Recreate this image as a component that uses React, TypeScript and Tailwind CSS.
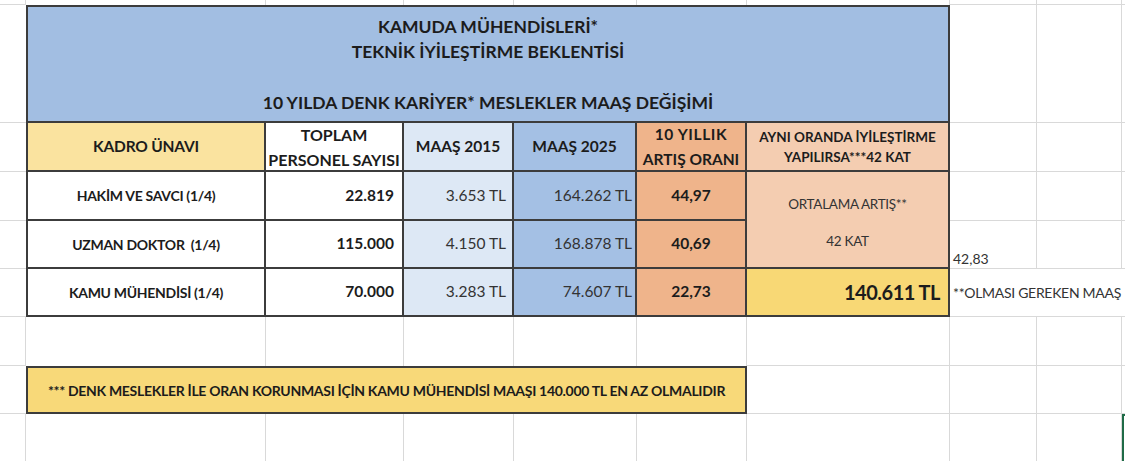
export default function App() {
  return (
    <div className="w-[1125px] h-[461px] overflow-hidden bg-white font-['Lato',sans-serif] text-[#1c1c1c]">
      <div className="grid grid-cols-[26px_240px_138px_110px_123px_110px_203px_87px_85px_3px] grid-rows-[5px_118px_49px_49px_48px_48px_49px_48px_47px]">
        {/* Row 0 */}
        <div className="border-r border-b border-[#d9d9d9]" />
        <div className="border-r border-[#d9d9d9]" />
        <div className="border-r border-[#d9d9d9]" />
        <div className="border-r border-[#d9d9d9]" />
        <div className="border-r border-[#d9d9d9]" />
        <div className="border-r border-[#d9d9d9]" />
        <div className="border-r border-[#d9d9d9]" />
        <div className="border-r border-b border-[#d9d9d9]" />
        <div className="border-r border-b border-[#d9d9d9]" />
        <div className="border-b border-[#d9d9d9]" />

        {/* Row 1: title */}
        <div className="border-b border-[#d9d9d9]" />
        <div className="col-span-6 bg-[#a2bee2] border-2 border-[#3c3c3c] flex flex-col items-center justify-center font-bold text-[17.5px] leading-[25.5px] pt-[1px]">
          <div>KAMUDA MÜHENDİSLERİ*</div>
          <div>TEKNİK İYİLEŞTİRME BEKLENTİSİ</div>
          <div>&nbsp;</div>
          <div>10 YILDA DENK KARİYER* MESLEKLER MAAŞ DEĞİŞİMİ</div>
        </div>
        <div className="border-r border-b border-[#d9d9d9]" />
        <div className="border-r border-b border-[#d9d9d9]" />
        <div className="border-b border-[#d9d9d9]" />

        {/* Row 2: headers */}
        <div className="border-b border-[#d9d9d9]" />
        <div className="bg-[#fae39f] border-l-2 border-r-2 border-b-2 border-[#3c3c3c] flex items-center justify-center font-bold text-[15.5px] tracking-[-0.2px]">
          KADRO ÜNAVI
        </div>
        <div className="bg-white border-r-2 border-b-2 border-[#3c3c3c] flex flex-col items-center justify-center font-bold text-[16px] leading-[25px]">
          <div>TOPLAM</div>
          <div>PERSONEL SAYISI</div>
        </div>
        <div className="bg-[#dde8f5] border-r-2 border-b-2 border-[#3c3c3c] flex items-center justify-center font-bold text-[15.5px]">
          MAAŞ 2015
        </div>
        <div className="bg-[#a4c0e4] border-r-2 border-b-2 border-[#3c3c3c] flex items-center justify-center font-bold text-[15.5px]">
          MAAŞ 2025
        </div>
        <div className="bg-[#efb48b] border-r-2 border-b-2 border-[#3c3c3c] flex flex-col items-center justify-center font-bold text-[15.5px] leading-[25px]">
          <div className="tracking-[0.6px]">10 YILLIK</div>
          <div>ARTIŞ ORANI</div>
        </div>
        <div className="bg-[#f4cdb1] border-r-2 border-b-2 border-[#3c3c3c] flex flex-col items-center justify-center font-bold text-[13.5px] leading-[20px]">
          <div>AYNI ORANDA İYİLEŞTİRME</div>
          <div>YAPILIRSA***42 KAT</div>
        </div>
        <div className="border-r border-b border-[#d9d9d9]" />
        <div className="border-r border-b border-[#d9d9d9]" />
        <div className="border-b border-[#d9d9d9]" />

        {/* Row 3 */}
        <div className="border-b border-[#d9d9d9]" />
        <div className="bg-white border-l-2 border-r-2 border-b-2 border-[#3c3c3c] flex items-center justify-center font-bold text-[14px] tracking-[-0.3px]">
          HAKİM VE SAVCI (1/4)
        </div>
        <div className="bg-white border-r-2 border-b-2 border-[#3c3c3c] flex items-center justify-end pr-[8px] font-bold text-[15.5px]">
          22.819
        </div>
        <div className="bg-[#dde8f5] border-r-2 border-b-2 border-[#3c3c3c] flex items-center justify-end pr-[6px] text-[15.5px] text-[#333]">
          3.653 TL
        </div>
        <div className="bg-[#a4c0e4] border-r-2 border-b-2 border-[#3c3c3c] flex items-center justify-end pr-[3px] text-[15.5px] text-[#333]">
          164.262 TL
        </div>
        <div className="bg-[#efb48b] border-r-2 border-b-2 border-[#3c3c3c] flex items-center justify-center font-bold text-[15.5px]">
          44,97
        </div>
        <div className="row-span-2 bg-[#f4cdb1] border-r-2 border-b-2 border-[#3c3c3c] flex flex-col items-center justify-center pt-[6px] gap-[19px] text-[13.5px] leading-[18px] tracking-[-0.3px] text-[#333]">
          <div>ORTALAMA ARTIŞ**</div>
          <div>42 KAT</div>
        </div>
        <div className="border-r border-b border-[#d9d9d9]" />
        <div className="border-r border-b border-[#d9d9d9]" />
        <div className="border-b border-[#d9d9d9]" />

        {/* Row 4 */}
        <div className="border-b border-[#d9d9d9]" />
        <div className="bg-white border-l-2 border-r-2 border-b-2 border-[#3c3c3c] flex items-center justify-center font-bold text-[14px] tracking-[-0.3px]">
          UZMAN DOKTOR&nbsp; (1/4)
        </div>
        <div className="bg-white border-r-2 border-b-2 border-[#3c3c3c] flex items-center justify-end pr-[8px] font-bold text-[15.5px]">
          115.000
        </div>
        <div className="bg-[#dde8f5] border-r-2 border-b-2 border-[#3c3c3c] flex items-center justify-end pr-[6px] text-[15.5px] text-[#333]">
          4.150 TL
        </div>
        <div className="bg-[#a4c0e4] border-r-2 border-b-2 border-[#3c3c3c] flex items-center justify-end pr-[3px] text-[15.5px] text-[#333]">
          168.878 TL
        </div>
        <div className="bg-[#efb48b] border-r-2 border-b-2 border-[#3c3c3c] flex items-center justify-center font-bold text-[15.5px]">
          40,69
        </div>
        <div className="border-r border-b border-[#d9d9d9] flex items-end pl-[3px] pb-[1px] text-[14px] leading-[16px] text-[#333]">
          42,83
        </div>
        <div className="border-r border-b border-[#d9d9d9]" />
        <div className="border-b border-[#d9d9d9]" />

        {/* Row 5 */}
        <div className="border-b border-[#d9d9d9]" />
        <div className="bg-white border-l-2 border-r-2 border-b-2 border-[#3c3c3c] flex items-center justify-center font-bold text-[14px] tracking-[-0.3px]">
          KAMU MÜHENDİSİ (1/4)
        </div>
        <div className="bg-white border-r-2 border-b-2 border-[#3c3c3c] flex items-center justify-end pr-[8px] font-bold text-[15.5px]">
          70.000
        </div>
        <div className="bg-[#dde8f5] border-r-2 border-b-2 border-[#3c3c3c] flex items-center justify-end pr-[6px] text-[15.5px] text-[#333]">
          3.283 TL
        </div>
        <div className="bg-[#a4c0e4] border-r-2 border-b-2 border-[#3c3c3c] flex items-center justify-end pr-[3px] text-[15.5px] text-[#333]">
          74.607 TL
        </div>
        <div className="bg-[#efb48b] border-r-2 border-b-2 border-[#3c3c3c] flex items-center justify-center font-bold text-[15.5px]">
          22,73
        </div>
        <div className="bg-[#f8d875] border-r-2 border-b-2 border-[#3c3c3c] flex items-center justify-end pr-[8px] font-bold text-[20px] tracking-[-0.5px]">
          140.611 TL
        </div>
        <div className="col-span-3 border-b border-[#d9d9d9] flex items-center pl-[3px] whitespace-nowrap overflow-hidden text-[14px] tracking-[-0.3px] text-[#333]">
          **OLMASI GEREKEN MAAŞ
        </div>

        {/* Row 6 */}
        <div className="border-r border-b border-[#d9d9d9]" />
        <div className="border-r border-[#d9d9d9]" />
        <div className="border-r border-[#d9d9d9]" />
        <div className="border-r border-[#d9d9d9]" />
        <div className="border-r border-[#d9d9d9]" />
        <div className="border-r border-[#d9d9d9]" />
        <div className="border-r border-b border-[#d9d9d9]" />
        <div className="border-r border-b border-[#d9d9d9]" />
        <div className="border-r border-b border-[#d9d9d9]" />
        <div className="border-b border-[#d9d9d9]" />

        {/* Row 7: note */}
        <div className="border-b border-[#d9d9d9]" />
        <div className="col-span-5 bg-[#f8d979] border-2 border-[#3c3c3c] flex items-center justify-center font-bold text-[14px] tracking-[-0.3px]">
          *** DENK MESLEKLER İLE ORAN KORUNMASI İÇİN KAMU MÜHENDİSİ MAAŞI 140.000 TL EN AZ OLMALIDIR
        </div>
        <div className="border-r border-b border-[#d9d9d9]" />
        <div className="border-r border-b border-[#d9d9d9]" />
        <div className="border-r border-b border-[#d9d9d9]" />
        <div className="border-b border-[#d9d9d9]" />

        {/* Row 8 */}
        <div className="border-r border-[#d9d9d9]" />
        <div className="border-r border-[#d9d9d9]" />
        <div className="border-r border-[#d9d9d9]" />
        <div className="border-r border-[#d9d9d9]" />
        <div className="border-r border-[#d9d9d9]" />
        <div className="border-r border-[#d9d9d9]" />
        <div className="border-r border-[#d9d9d9]" />
        <div className="border-r border-[#d9d9d9]" />
        <div className="border-r border-[#d9d9d9]" />
        <div className="border-l-2 border-t-2 border-[#1f6b47]" />
      </div>
    </div>
  );
}
